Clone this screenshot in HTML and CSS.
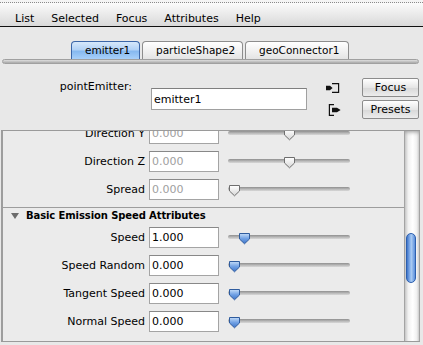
FILE: index.html
```html
<!DOCTYPE html>
<html lang="en">
<head>
    <meta charset="UTF-8">
    <title>Attribute Editor - emitter1</title>
    <link rel="stylesheet" href="styles.css">
</head>
<body>
    <div class="titlebar"></div>
    <nav class="menubar">
        <span>List</span>
        <span>Selected</span>
        <span>Focus</span>
        <span>Attributes</span>
        <span>Help</span>
    </nav>

    <div class="tabs">
        <div class="tab active">emitter1</div>
        <div class="tab">particleShape2</div>
        <div class="tab geo">geoConnector1</div>
    </div>
    <div class="tabbar"></div>

    <div class="nodehead">
        <div class="node-label">pointEmitter:</div>
        <input class="node-name" type="text" value="emitter1">
        <svg class="icon-in" width="14" height="10" viewBox="0 0 14 10">
            <path d="M6 0.6 H12.6 V9.4 H6" fill="none" stroke="#111" stroke-width="1.2"/>
            <polygon points="0,2.8 4,2.8 6.6,5 4,7.2 0,7.2" fill="#111"/>
        </svg>
        <button class="btn">Focus</button>
        <svg class="icon-out" width="14" height="12" viewBox="0 0 14 12">
            <path d="M6 0.6 H1.4 V11.4 H6" fill="none" stroke="#111" stroke-width="1.2"/>
            <polygon points="4,3.8 9,3.8 12.6,6 9,8.2 4,8.2" fill="#111"/>
        </svg>
        <button class="btn">Presets</button>
    </div>

    <div class="editor">
        <div class="scroll">
            <div class="section first">
                <div class="row">
                    <span class="label">Direction Y</span>
                    <input class="field off" type="text" value="0.000">
                    <div class="slider"><div class="track"></div><svg class="thumb" style="left:55px" width="13" height="13" viewBox="0 0 13 13"><use href="#knob"/></svg></div>
                </div>
                <div class="row">
                    <span class="label">Direction Z</span>
                    <input class="field off" type="text" value="0.000">
                    <div class="slider"><div class="track"></div><svg class="thumb" style="left:55px" width="13" height="13" viewBox="0 0 13 13"><use href="#knob"/></svg></div>
                </div>
                <div class="row">
                    <span class="label">Spread</span>
                    <input class="field off" type="text" value="0.000">
                    <div class="slider"><div class="track"></div><svg class="thumb" style="left:0px" width="13" height="13" viewBox="0 0 13 13"><use href="#knob"/></svg></div>
                </div>
            </div>

            <div class="section">
                <div class="section-head">
                    <span class="arrow"></span>
                    <span>Basic Emission Speed Attributes</span>
                </div>
                <div class="row">
                    <span class="label">Speed</span>
                    <input class="field" type="text" value="1.000">
                    <div class="slider"><div class="track"></div><svg class="thumb" style="left:10px" width="13" height="13" viewBox="0 0 13 13"><use href="#knob-blue"/></svg></div>
                </div>
                <div class="row">
                    <span class="label">Speed Random</span>
                    <input class="field" type="text" value="0.000">
                    <div class="slider"><div class="track"></div><svg class="thumb" style="left:0px" width="13" height="13" viewBox="0 0 13 13"><use href="#knob-blue"/></svg></div>
                </div>
                <div class="row">
                    <span class="label">Tangent Speed</span>
                    <input class="field" type="text" value="0.000">
                    <div class="slider"><div class="track"></div><svg class="thumb" style="left:0px" width="13" height="13" viewBox="0 0 13 13"><use href="#knob-blue"/></svg></div>
                </div>
                <div class="row">
                    <span class="label">Normal Speed</span>
                    <input class="field" type="text" value="0.000">
                    <div class="slider"><div class="track"></div><svg class="thumb" style="left:0px" width="13" height="13" viewBox="0 0 13 13"><use href="#knob-blue"/></svg></div>
                </div>
            </div>
        </div>
        <div class="scrollbar">
            <div class="scroll-thumb"></div>
        </div>
    </div>

    <!-- slider knobs -->
    <svg class="defs" width="0" height="0">
        <defs>
            <linearGradient id="knob-fill" x1="0" y1="0" x2="0" y2="1">
                <stop offset="0" stop-color="#ffffff"/>
                <stop offset="1" stop-color="#d6d6d6"/>
            </linearGradient>
            <linearGradient id="knob-blue-fill" x1="0" y1="0" x2="0" y2="1">
                <stop offset="0" stop-color="#c4dcf8"/>
                <stop offset="0.5" stop-color="#6fa0e4"/>
                <stop offset="1" stop-color="#3e74c8"/>
            </linearGradient>
            <path id="knob" d="M1.5 1.5 H11.5 V7 L6.5 11.8 L1.5 7 Z" fill="url(#knob-fill)" stroke="#6e6e6e"/>
            <path id="knob-blue" d="M1.5 1.5 H11.5 V7 L6.5 11.8 L1.5 7 Z" fill="url(#knob-blue-fill)" stroke="#2f5c9e"/>
        </defs>
    </svg>
</body>
</html>
```

FILE: styles.css
```css
* {
    margin: 0;
    padding: 0;
    box-sizing: border-box;
}

body {
    width: 423px;
    height: 345px;
    overflow: hidden;
    background: #e8e8e8;
    font-family: "DejaVu Sans", sans-serif;
    font-size: 11px;
    color: #000;
}

.titlebar {
    height: 3px;
    border-bottom: 1px dotted #8a8a8a;
    background: #f4f4f4;
}

.menubar {
    height: 24px;
    display: flex;
    gap: 17px;
    padding: 9px 0 0 15px;
    line-height: 13px;
    background: linear-gradient(#fbfbfb, #d9d9d9);
    border-bottom: 1px solid #111;
}

/* tabs */
.tabs {
    display: flex;
    gap: 2px;
    margin: 14px 0 0 71px;
}

.tab {
    height: 18px;
    padding: 0 13px;
    line-height: 17px;
    font-size: 10.5px;
    text-align: center;
    border: 1px solid #8d8d8d;
    border-bottom: none;
    border-radius: 4px 4px 0 0;
    background: linear-gradient(#ffffff, #e4e4e4);
}

.tab.active {
    width: 69px;
    border-color: #3b66a8;
    background: linear-gradient(#d6e8fb 0, #b2d2f6 45%, #86b9f0 55%, #a8d0fa 100%);
}

.tab:nth-child(2) {
    width: 101px;
}

.tab.geo {
    width: 104px;
}

.tabbar {
    height: 5px;
    margin: 0 4px 0 2px;
    border-radius: 3px;
    background: linear-gradient(#dedede, #a9a9a9);
    border: 1px solid #a0a0a0;
}

/* node name row */
.nodehead {
    display: grid;
    grid-template-columns: 132px 156px 16px 58px;
    grid-template-rows: 20px 20px;
    column-gap: 19px;
    row-gap: 2px;
    margin-top: 14px;
}

.node-label {
    grid-row: 1;
    grid-column: 1;
    text-align: right;
    padding-top: 2px;
    line-height: 13px;
}

.node-name {
    grid-row: 1 / 3;
    grid-column: 2;
    align-self: center;
    height: 22px;
    padding-left: 2px;
    font: 11px "DejaVu Sans", sans-serif;
    border: 1px solid #a0a0a0;
    border-top-color: #7f7f7f;
    background: #fff;
    outline: none;
}

.icon-in {
    grid-row: 1;
    grid-column: 3;
    align-self: center;
}

.icon-out {
    grid-row: 2;
    grid-column: 3;
    align-self: center;
    margin-left: 2px;
}

.btn {
    grid-column: 4;
    margin-left: 1px;
    height: 19px;
    font: 11px "DejaVu Sans", sans-serif;
    color: #000;
    border: 1px solid #8c8c8c;
    border-radius: 2px;
    background: linear-gradient(#ffffff, #e6e6e6 50%, #d8d8d8 51%, #ececec);
}

/* attribute panel */
.editor {
    display: flex;
    height: 212px;
    margin: 10px 0 0 1px;
    width: 419px;
    border-top: 1px solid #9a9a9a;
    border-bottom: 1px solid #9a9a9a;
}

.scroll {
    width: 403px;
    overflow: hidden;
    border-left: 2px solid #9d9d9d;
    background: #ebebeb;
}

.section.first {
    margin-top: -12px;
    padding-bottom: 4px;
}

.section + .section {
    border-top: 1px solid #9d9d9d;
}

.section-head {
    display: flex;
    align-items: center;
    gap: 7px;
    height: 15px;
    padding-left: 8px;
    font-weight: bold;
    font-size: 10px;
    letter-spacing: -0.1px;
}

.arrow {
    width: 0;
    height: 0;
    border-left: 4px solid transparent;
    border-right: 4px solid transparent;
    border-top: 6px solid #6c6c6c;
    margin-top: 1px;
}

.row {
    display: grid;
    grid-template-columns: 143px 70px 122px;
    align-items: center;
    height: 28px;
}

.label {
    text-align: right;
    padding-right: 1px;
}

.field {
    width: 70px;
    height: 21px;
    margin-left: 3px;
    padding-left: 2px;
    font: 11px "DejaVu Sans", sans-serif;
    color: #000;
    border: 1px solid #a4a4a4;
    border-top-color: #888;
    background: #fff;
    outline: none;
}

.field.off {
    color: #a0a0a0;
}

.slider {
    position: relative;
    width: 122px;
    height: 14px;
    margin-left: 12px;
}

.track {
    position: absolute;
    left: 0;
    right: 0;
    top: 5px;
    height: 4px;
    border-radius: 2px;
    background: linear-gradient(#8f8f8f, #bdbdbd 60%, #d8d8d8);
}

.thumb {
    position: absolute;
    top: 2px;
}

/* scrollbar */
.scrollbar {
    width: 16px;
    border-left: 1px solid #a3a3a3;
    border-right: 1px solid #a3a3a3;
    border-radius: 0;
    background: linear-gradient(to right, #cfcfcf, #f2f2f2 25%, #ffffff 55%, #f0f0f0 85%, #d6d6d6);
    box-shadow: inset 0 3px 4px -2px #9a9a9a;
}

.scroll-thumb {
    width: 10px;
    height: 50px;
    margin: 102px 0 0 1px;
    border-radius: 5px;
    border: 1px solid #2c5fae;
    background: linear-gradient(to right, #3f74c9, #8cb6ee 40%, #a9caf2 55%, #5b8fdc);
}

.defs {
    position: absolute;
}
```
